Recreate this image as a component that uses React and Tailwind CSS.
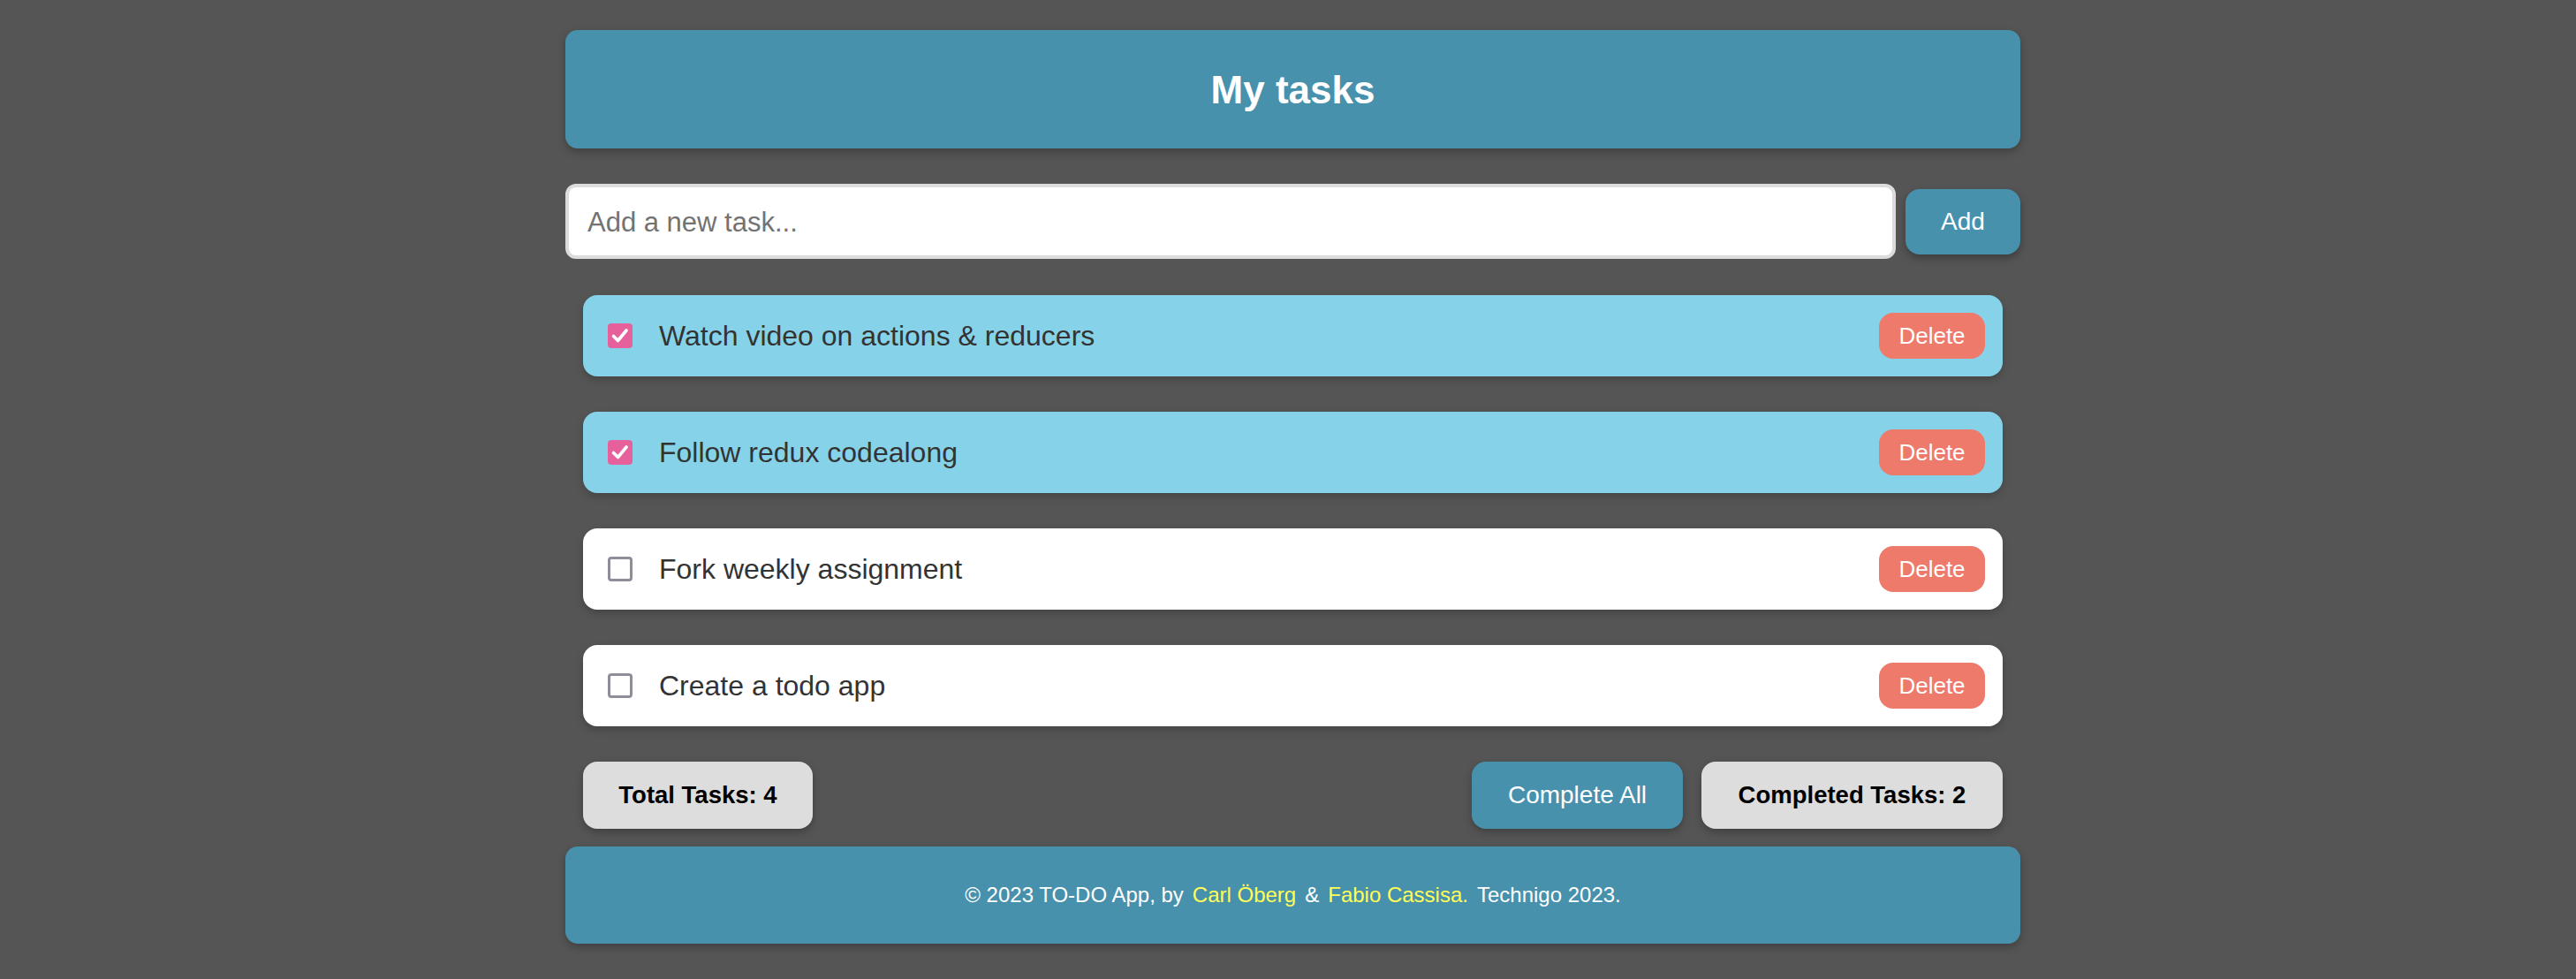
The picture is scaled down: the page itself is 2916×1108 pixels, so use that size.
import React from "react";

const tasks = [
  { text: "Watch video on actions & reducers", done: true },
  { text: "Follow redux codealong", done: true },
  { text: "Fork weekly assignment", done: false },
  { text: "Create a todo app", done: false },
];

function Check({ done }) {
  if (done) {
    return (
      <span className="flex h-[28px] w-[28px] shrink-0 items-center justify-center rounded-[4px] bg-[#e6619c]">
        <svg width="24" height="24" viewBox="0 0 24 24" fill="none">
          <path d="M4.5 12.5 L9.5 17.5 L19 6" stroke="white" strokeWidth="3.6" strokeLinecap="round" strokeLinejoin="round" />
        </svg>
      </span>
    );
  }
  return <span className="block h-[28px] w-[28px] shrink-0 rounded-[4px] border-[3px] border-[#8e8e9b] bg-white" />;
}

export default function App() {
  return (
    <div
      className="min-h-[1108px] w-full bg-[#555555] pt-[34px]"
      style={{ fontFamily: '"Liberation Sans", Arial, Helvetica, sans-serif' }}
    >
      <div className="ml-[640px] flex w-[1647px] flex-col">
        <header className="flex h-[134px] items-center justify-center rounded-[14px] bg-[#4791ad] pt-[2px] shadow-[0_4px_10px_rgba(0,0,0,0.25)]">
          <h1 className="text-[44px] font-bold text-white">My tasks</h1>
        </header>

        <div className="mt-[40px] flex h-[85px] items-center gap-[11px]">
          <input
            className="h-[85px] flex-1 rounded-[12px] border-[4px] border-[#dcdcdc] bg-white px-[21px] pt-[2px] text-[31px] text-[#333] outline-none placeholder:text-[#737373]"
            placeholder="Add a new task..."
          />
          <button className="h-[74px] w-[130px] rounded-[16px] bg-[#4791ad] text-[28px] text-white shadow-[0_4px_10px_rgba(0,0,0,0.3)]">
            Add
          </button>
        </div>

        <div className="mt-[41px] flex flex-col gap-[40px] px-[20px]">
          {tasks.map((t) => (
            <div
              key={t.text}
              className={`flex h-[92px] items-center rounded-[16px] pl-[28px] pr-[20px] shadow-[0_4px_10px_rgba(0,0,0,0.2)] ${t.done ? "bg-[#86d3e9]" : "bg-white"}`}
            >
              <Check done={t.done} />
              <span className="ml-[30px] flex-1 text-[32px] text-[#333333]">{t.text}</span>
              <button className="h-[52px] w-[120px] rounded-[16px] bg-[#ee7a6b] text-[26px] text-white">Delete</button>
            </div>
          ))}
        </div>

        <div className="mt-[40px] flex h-[76px] items-center px-[20px]">
          <div className="flex h-[76px] w-[260px] items-center justify-center rounded-[16px] bg-[#dddddd] text-[27.5px] font-bold text-black shadow-[0_4px_10px_rgba(0,0,0,0.25)]">
            Total Tasks: 4
          </div>
          <div className="flex-1" />
          <button className="h-[76px] w-[239px] rounded-[16px] bg-[#4791ad] text-[28px] text-white shadow-[0_4px_10px_rgba(0,0,0,0.25)]">
            Complete All
          </button>
          <div className="ml-[21px] flex h-[76px] w-[341px] items-center justify-center rounded-[16px] bg-[#dddddd] text-[27.5px] font-bold text-black shadow-[0_4px_10px_rgba(0,0,0,0.25)]">
            Completed Tasks: 2
          </div>
        </div>

        <footer className="mt-[20px] flex h-[110px] items-center justify-center gap-[10px] rounded-[14px] bg-[#4791ad] text-[24px] text-white shadow-[0_4px_10px_rgba(0,0,0,0.25)]">
          <span>© 2023 TO-DO App, by</span>
          <span className="text-[#ffff55]">Carl Öberg</span>
          <span>&amp;</span>
          <span className="text-[#ffff55]">Fabio Cassisa.</span>
          <span>Technigo 2023.</span>
        </footer>
      </div>
    </div>
  );
}
